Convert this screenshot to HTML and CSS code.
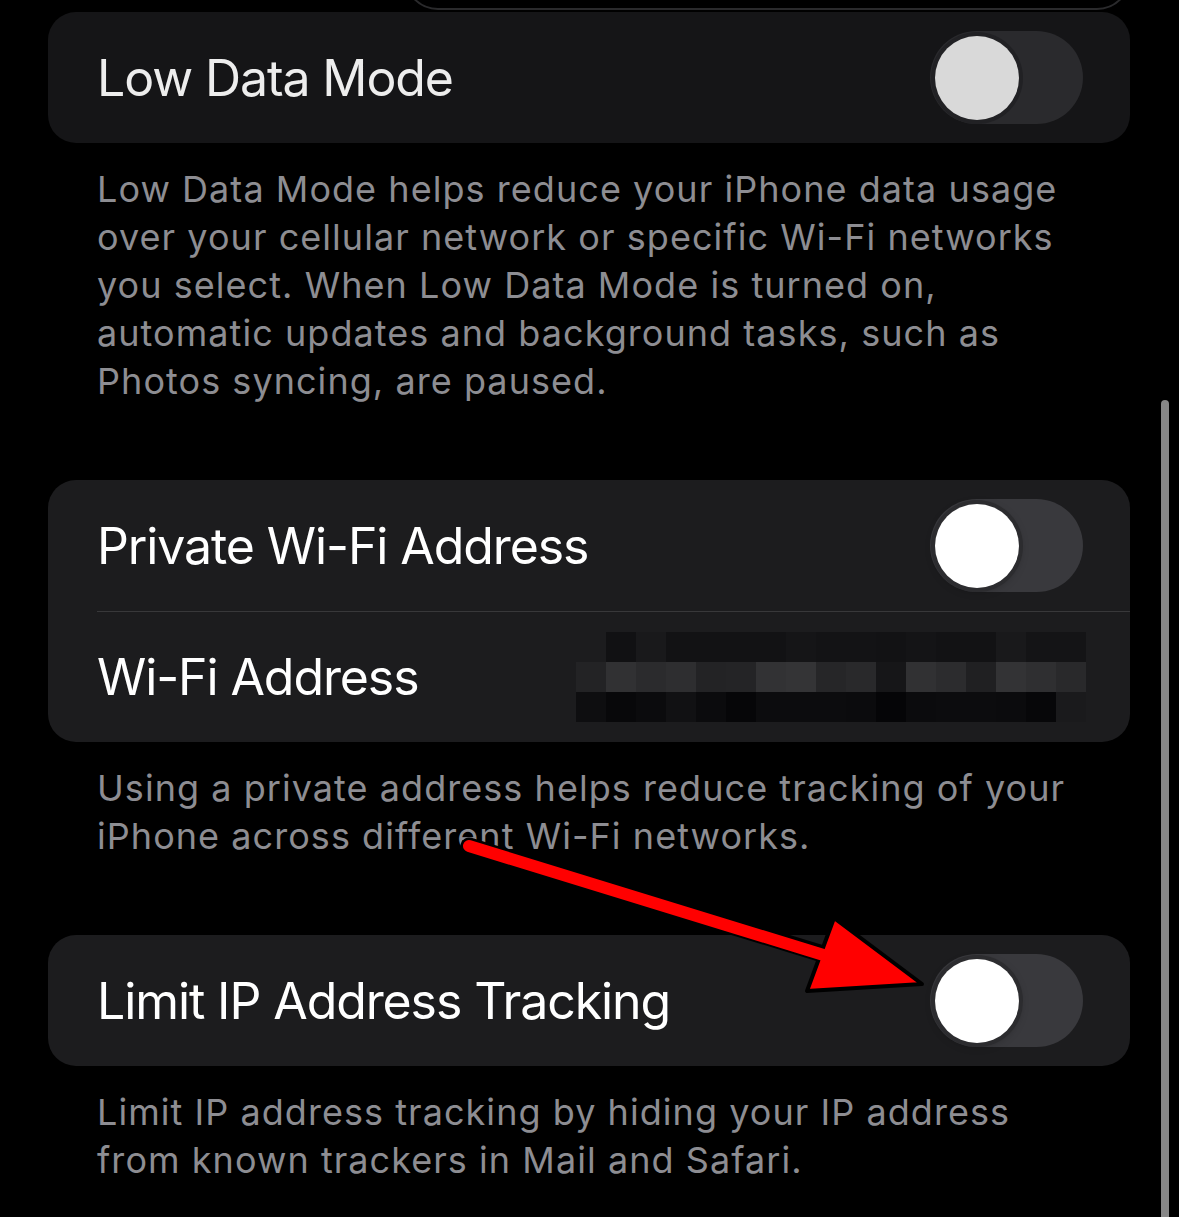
FILE: index.html
```html
<!DOCTYPE html>
<html lang="en">
<head>
  <meta charset="UTF-8">
  <meta name="viewport" content="width=device-width, initial-scale=1.0">
  <title>Wi-Fi Options</title>
  <link rel="stylesheet" href="styles.css">
</head>
<body>

<div class="screen">
  <div class="menu-edge"></div>

  <section class="group">
    <div class="card dimmed">
      <div class="cell">
        <span class="cell-title">Low Data Mode</span>
        <div class="switch"><div class="knob"></div></div>
      </div>
    </div>
    <p class="footer">Low Data Mode helps reduce your iPhone data usage<br>over your cellular network or specific Wi-Fi networks<br>you select. When Low Data Mode is turned on,<br>automatic updates and background tasks, such as<br>Photos syncing, are paused.</p>
  </section>

  <section class="group">
    <div class="card">
      <div class="cell">
        <span class="cell-title">Private Wi-Fi Address</span>
        <div class="switch"><div class="knob"></div></div>
      </div>
      <div class="separator"></div>
      <div class="cell short">
        <span class="cell-title">Wi-Fi Address</span>
        <div class="blurred" id="mac-blur"></div>
      </div>
    </div>
    <p class="footer">Using a private address helps reduce tracking of your<br>iPhone across different Wi-Fi networks.</p>
  </section>

  <section class="group">
    <div class="card">
      <div class="cell">
        <span class="cell-title">Limit IP Address Tracking</span>
        <div class="switch"><div class="knob"></div></div>
      </div>
    </div>
    <p class="footer">Limit IP address tracking by hiding your IP address<br>from known trackers in Mail and Safari.</p>
  </section>

  <div class="scrollbar"></div>

  <svg class="arrow" viewBox="0 0 1179 1217" xmlns="http://www.w3.org/2000/svg">
    <line x1="469" y1="846" x2="826" y2="955" stroke="#000" stroke-width="17" stroke-linecap="round"/>
    <polygon points="834,918 807,991 922,984" fill="#ff0000" stroke="#000" stroke-width="4" stroke-linejoin="round"/>
    <line x1="469" y1="846" x2="830" y2="957" stroke="#ff0000" stroke-width="12" stroke-linecap="round"/>
  </svg>
</div>

<script>
  // pixelated mac address, one grey level per block
  const rows = [
    [28, 17, 25, 18, 18, 18, 18, 21, 19, 19, 18, 20, 18, 18, 25, 20, 20],
    [35, 49, 43, 46, 35, 36, 50, 52, 38, 41, 22, 49, 44, 32, 51, 47, 41],
    [14, 8, 11, 17, 11, 6, 12, 12, 12, 11, 5, 11, 12, 12, 11, 7, 26]
  ];
  const blur = document.getElementById("mac-blur");
  rows.forEach(function (row) {
    row.forEach(function (v) {
      const cell = document.createElement("div");
      cell.style.background = "rgb(" + v + "," + v + "," + (v + 2) + ")";
      blur.appendChild(cell);
    });
  });
</script>

</body>
</html>
```

FILE: styles.css
```css
html, body {
  margin: 0;
  padding: 0;
  background: #000000;
  font-family: Inter, "Noto Sans", sans-serif;
  -webkit-font-smoothing: antialiased;
}
.screen {
  position: relative;
  width: 1179px;
  height: 1217px;
  overflow: hidden;
  padding-top: 12px;
  box-sizing: border-box;
}

/* bottom of the menu that sits above the list */
.menu-edge {
  position: absolute;
  left: 404px;
  top: -70px;
  width: 727px;
  height: 80px;
  box-sizing: border-box;
  border: 2px solid #2a2a2c;
  border-radius: 34px;
  background: #000;
}

.group { margin: 0 48px 0 48px; width: 1082px; }
.card {
  background: #1c1c1e;
  border-radius: 28px;
  overflow: hidden;
}
.card.dimmed { background: #151517; }
.cell {
  height: 131px;
  display: flex;
  align-items: center;
  padding: 0 47px 0 49px;
}
.cell.short { height: 130px; }
.cell-title {
  flex: 1;
  color: #ffffff;
  font-size: 50px;
  letter-spacing: -1.1px;
  white-space: nowrap;
}
.dimmed .cell-title { color: #ededed; }
.separator {
  height: 1px;
  margin-left: 49px;
  background: #38383a;
}

.switch {
  width: 153px;
  height: 93px;
  border-radius: 47px;
  background: #39393d;
  display: flex;
  align-items: center;
  padding: 0 5px;
  box-sizing: border-box;
}
.knob {
  width: 84px;
  height: 84px;
  border-radius: 50%;
  background: #ffffff;
  box-shadow: 0 0 0 4px #2c2c2f, 0 2px 10px rgba(0,0,0,0.35);
}
.dimmed .switch { background: #2a2a2d; }
.dimmed .knob { background: #d9d9d9; box-shadow: 0 0 0 4px #212124; }

.blurred {
  display: grid;
  grid-template-columns: repeat(17, 30px);
  grid-template-rows: repeat(3, 30px);
  margin-right: -3px;
}

.footer {
  margin: 0;
  padding: 22px 0 75px 49px;
  color: #8d8d92;
  font-size: 36px;
  line-height: 48px;
  letter-spacing: 1.05px;
  white-space: nowrap;
}

.scrollbar {
  position: absolute;
  left: 1161px;
  top: 400px;
  width: 8px;
  height: 830px;
  border-radius: 4px;
  background: #878787;
}

.arrow {
  position: absolute;
  left: 0;
  top: 0;
  width: 1179px;
  height: 1217px;
}
```
